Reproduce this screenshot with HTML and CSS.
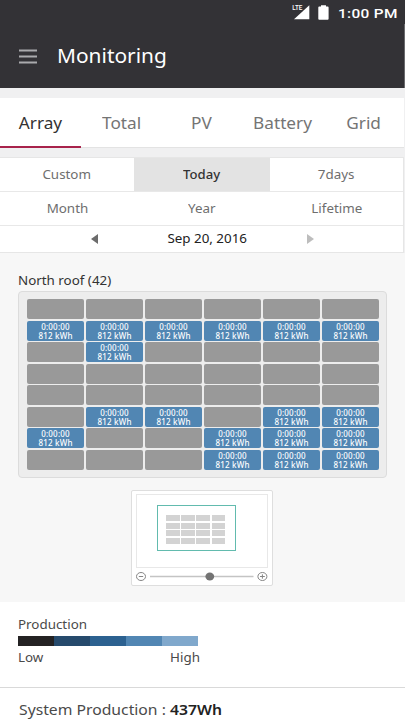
FILE: index.html
```html
<!DOCTYPE html>
<html lang="en">
<head>
    <meta charset="UTF-8">
    <meta name="viewport" content="width=device-width, initial-scale=1.0">
    <title>Monitoring</title>
    <link rel="stylesheet" href="styles.css">
</head>
<body>
    <header class="app-header">
        <div class="status-bar">
            <svg class="signal" width="18" height="16" viewBox="0 0 18 16">
                <path d="M17.3 0.2V14.2H2Z" fill="#fff"/>
                <path d="M0 0H11V5.6L10 6.6H0Z" fill="#333236"/>
                <text x="0.3" y="5" class="lte" textLength="10" lengthAdjust="spacingAndGlyphs">LTE</text>
            </svg>
            <svg class="battery" width="11" height="15" viewBox="0 0 11 15">
                <path d="M3 0.3H8V1.6H9.7Q10.6 1.6 10.6 2.5V13.8Q10.6 14.7 9.7 14.7H1.2Q0.3 14.7 0.3 13.8V2.5Q0.3 1.6 1.2 1.6H3Z" fill="#fff"/>
            </svg>
            <span class="clock">1:00 PM</span>
        </div>
        <div class="title-bar">
            <svg class="menu-icon" width="18" height="15" viewBox="0 0 18 15">
                <path d="M0 1.5H18M0 7.5H18M0 13.5H18" stroke="#aaaaad" stroke-width="1.8"/>
            </svg>
            <h1 class="wide">Monitoring</h1>
        </div>
    </header>

    <nav class="tabs">
        <a class="tab active"><span class="wide">Array</span></a>
        <a class="tab"><span class="wide">Total</span></a>
        <a class="tab pv"><span class="wide">PV</span></a>
        <a class="tab"><span class="wide">Battery</span></a>
        <a class="tab"><span class="wide">Grid</span></a>
    </nav>

    <section class="period">
        <div class="period-row">
            <span class="cell"><span class="wide">Custom</span></span>
            <span class="cell selected"><span class="wide">Today</span></span>
            <span class="cell"><span class="wide">7days</span></span>
        </div>
        <div class="period-row">
            <span class="cell"><span class="wide">Month</span></span>
            <span class="cell"><span class="wide">Year</span></span>
            <span class="cell"><span class="wide">Lifetime</span></span>
        </div>
        <div class="date-row">
            <svg width="7" height="10" viewBox="0 0 7 10"><path d="M7 0V10L0 5Z" fill="#6c6c6c"/></svg>
            <span class="date"><span class="wide">Sep 20, 2016</span></span>
            <svg width="7" height="10" viewBox="0 0 7 10"><path d="M0 0V10L7 5Z" fill="#bdbdbd"/></svg>
        </div>
    </section>

    <main class="roof">
        <h2 class="wide">North roof (42)</h2>
        <div class="array" id="array"></div>
        <div class="minimap">
            <div class="map-area">
                <div class="viewport">
                    <div class="mini-grid">
                        <i></i><i></i><i></i><i></i>
                        <i></i><i></i><i></i><i></i>
                        <i></i><i></i><i></i><i></i>
                        <i></i><i></i><i></i><i></i>
                    </div>
                </div>
            </div>
            <svg class="slider" width="132" height="11" viewBox="0 0 132 11">
                <g fill="none" stroke="#858585" stroke-width="1">
                    <ellipse cx="5" cy="5.5" rx="4.5" ry="4"/>
                    <path d="M2.8 5.5H7.2"/>
                    <ellipse cx="126.4" cy="5.5" rx="4.5" ry="4"/>
                    <path d="M124 5.5H128.8M126.4 3.3V7.7"/>
                </g>
                <path d="M14 5.5H117.5" stroke="#c4c4c4" stroke-width="1.5"/>
                <ellipse cx="73.8" cy="5.5" rx="4.4" ry="4" fill="#737373"/>
            </svg>
        </div>
    </main>

    <section class="legend">
        <div><span class="wide">Production</span></div>
        <div class="scale">
            <i class="l1"></i><i class="l2"></i><i class="l3"></i><i class="l4"></i><i class="l5"></i>
        </div>
        <div class="scale-labels"><span class="wide">Low</span><span class="wide high">High</span></div>
    </section>

    <footer class="total"><span class="wide">System Production : <b>437Wh</b></span></footer>

    <script>
        // 1 = panel producing, 0 = no data
        const panels = [
            '000000',
            '111111',
            '010000',
            '000000',
            '000000',
            '011011',
            '100111',
            '000111'
        ];
        const array = document.getElementById('array');
        panels.join('').split('').forEach((state) => {
            const panel = document.createElement('div');
            panel.className = state === '1' ? 'panel on' : 'panel';
            if (state === '1') {
                panel.innerHTML = '0:00:00<br>812 kWh';
            }
            array.appendChild(panel);
        });
    </script>
</body>
</html>
```
FILE: styles.css
```css
* {
    box-sizing: border-box;
}

body {
    margin: 0;
    width: 405px;
    height: 720px;
    overflow: hidden;
    display: flex;
    flex-direction: column;
    background-color: #f0f0f1;
    font-family: "Noto Sans", "Open Sans", sans-serif;
    color: #333;
}

/* slightly extended lettering */
.wide {
    display: inline-block;
    transform: scaleX(1.07);
    white-space: nowrap;
}

.app-header {
    height: 88px;
    background-color: #333236;
    color: #fff;
}

.status-bar {
    display: flex;
    justify-content: flex-end;
    height: 24px;
    padding: 5px 9px 0 0;
}

.battery {
    margin: 0 9px 0 8px;
}

.lte {
    font: 500 6.5px Roboto, sans-serif;
    fill: #fff;
}

.clock {
    width: 58px;
    font: 500 13.5px/16px Roboto, sans-serif;
    letter-spacing: 0.3px;
    white-space: nowrap;
    transform: scaleX(1.14);
    transform-origin: left;
}

.title-bar {
    display: flex;
    align-items: center;
    height: 64px;
    padding-left: 19px;
    border-right: 1px solid #6a6a6d;
}

.title-bar h1 {
    margin: 0 0 0 20px;
    font-size: 19px;
    font-weight: 400;
    transform: scaleX(1.1);
    transform-origin: left;
}

.tabs {
    display: flex;
    height: 50px;
    width: 404px;
    margin-top: 10px;
    background-color: #fff;
    border-bottom: 1px solid #e3e3e3;
}

.tab {
    display: flex;
    justify-content: center;
    align-items: center;
    width: 81px;
    font-size: 15.5px;
    color: #747474;
}

.tab .wide {
    transform: scaleX(1.11);
}

.tab.pv {
    padding-right: 2px;
}

.tab.active {
    height: 50px;
    padding-top: 2px;
    border-bottom: 2px solid #a8234b;
    color: #333;
}

.period {
    width: 404px;
    height: 96px;
    margin-top: 9px;
    background-color: #fff;
    border: 1px solid #e6e6e6;
    border-left: none;
}

.period-row {
    display: grid;
    grid-template-columns: 134px 136px 133px;
    height: 34px;
    border-bottom: 1px solid #e8e8e8;
}

.cell {
    display: flex;
    justify-content: center;
    align-items: center;
    font-size: 12.5px;
    color: #6e6e6e;
}

.selected {
    padding-bottom: 1px;
    background-color: #e3e3e3;
    color: #333;
    font-weight: 500;
}

.selected .wide {
    transform: scaleX(1.05);
}

.date-row {
    display: flex;
    justify-content: center;
    align-items: center;
    height: 25px;
    padding-left: 1px;
    font-size: 12.5px;
    color: #222;
}

.date {
    width: 209px;
    padding: 0 0 1px 10px;
    text-align: center;
}

.roof {
    height: 349px;
    padding: 17px 18px 0;
    background-color: #f7f7f7;
}

.roof h2 {
    display: block;
    margin: 0;
    font-size: 12.5px;
    line-height: 21px;
    font-weight: 400;
    transform-origin: left;
}

.array {
    display: grid;
    grid-template-columns: repeat(6, 57px);
    grid-auto-rows: 20px;
    gap: 1.5px 2px;
    height: 187px;
    padding: 7px 8px;
    background-color: #ededed;
    border: 1px solid #dcdcdc;
    border-radius: 4px;
}

.panel {
    background-color: #999;
    border-radius: 2px;
}

.panel.on {
    padding-top: 1px;
    background-color: #5186b3;
    color: #fff;
    font-size: 8px;
    font-weight: 500;
    letter-spacing: 0.2px;
    line-height: 9px;
    text-align: center;
}

.minimap {
    width: 142px;
    height: 96px;
    margin: 12px 0 0 113px;
    padding: 3px 4px;
    background-color: #fff;
    border: 1px solid #dedede;
    border-radius: 2px;
}

.map-area {
    height: 74px;
    padding: 10px 0 0 20px;
    border: 1px solid #e8e8e8;
}

.viewport {
    width: 79px;
    height: 46px;
    padding: 9px 0 0 8px;
    border: 1px solid #62bbae;
}

.mini-grid {
    display: grid;
    grid-template-columns: repeat(4, 13.5px);
    grid-auto-rows: 6px;
    gap: 1.6px 1.7px;
}

.mini-grid i {
    background-color: #d3d3d3;
}

.slider {
    display: block;
    margin-top: 3px;
}

.legend {
    height: 85px;
    padding: 14px 18px 0;
    background-color: #fff;
    font-size: 12.5px;
    line-height: 18px;
    color: #4a4a4a;
}

.legend .wide {
    transform-origin: left;
}

.legend .high {
    transform-origin: right;
}

.scale {
    display: flex;
    width: 180px;
    height: 10px;
    margin-top: 2px;
}

.scale i {
    flex: 1;
}

.l1 { background-color: #242223; }
.l2 { background-color: #264a6c; }
.l3 { background-color: #2c6190; }
.l4 { background-color: #5186b3; }
.l5 { background-color: #80a8cc; }

.scale-labels {
    display: flex;
    justify-content: space-between;
    width: 182px;
    margin-top: 3px;
}

.total {
    flex: 1;
    padding: 10px 19px 0;
    background-color: #fff;
    border-top: 1px solid #d9d9d9;
    font-size: 15px;
    line-height: 22px;
    color: #4a4a4a;
}

.total .wide {
    transform: scaleX(1.048);
    transform-origin: left;
}

.total b {
    font-weight: 600;
    color: #222;
}
```
